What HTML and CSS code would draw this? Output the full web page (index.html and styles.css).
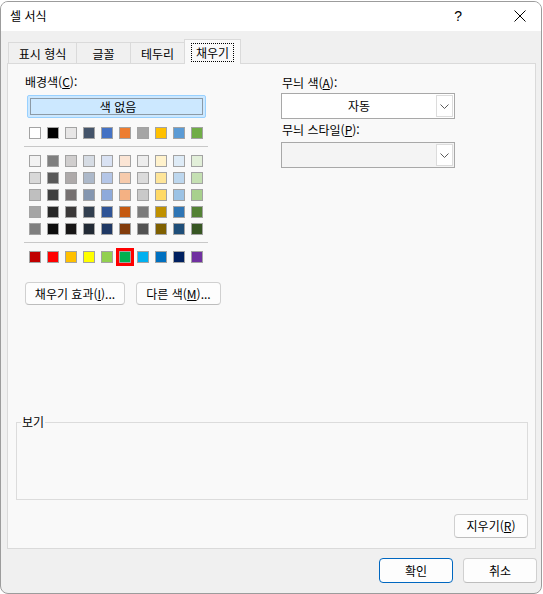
FILE: index.html
```html
<!DOCTYPE html>
<html lang="ko">
<head>
<meta charset="utf-8">
<title>셀 서식</title>
<link rel="stylesheet" href="styles.css">
</head>
<body>
<div class="window">
  <div class="titlebar">
    <span class="title">셀 서식</span>
    <span class="help">?</span>
    <svg class="close" width="12" height="12" viewBox="0 0 12 12"><path d="M0.5 0.5 L11.5 11.5 M11.5 0.5 L0.5 11.5" stroke="#000" stroke-width="1" fill="none"/></svg>
  </div>
  <div class="client">
    <div class="tabs">
      <div class="tab t1">표시 형식</div>
      <div class="tab t2">글꼴</div>
      <div class="tab t3">테두리</div>
      <div class="tab active"><span class="focus">채우기</span></div>
    </div>
    <div class="panel">
      <div class="cols">
        <div class="left">
          <div class="label">배경색(<u>C</u>):</div>
          <div class="nocolor"><span class="nocolor-in">색 없음</span></div>
          <div class="swrow first">
            <span class="sw" style="background:#FFFFFF"></span>
            <span class="sw" style="background:#000000"></span>
            <span class="sw" style="background:#E7E6E6"></span>
            <span class="sw" style="background:#44546A"></span>
            <span class="sw" style="background:#4472C4"></span>
            <span class="sw" style="background:#ED7D31"></span>
            <span class="sw" style="background:#A5A5A5"></span>
            <span class="sw" style="background:#FFC000"></span>
            <span class="sw" style="background:#5B9BD5"></span>
            <span class="sw" style="background:#70AD47"></span>
          </div>
          <div class="sep"></div>
          <div class="theme">
            <div class="swrow">
              <span class="sw" style="background:#F2F2F2"></span>
              <span class="sw" style="background:#7F7F7F"></span>
              <span class="sw" style="background:#D0CECE"></span>
              <span class="sw" style="background:#D6DCE4"></span>
              <span class="sw" style="background:#D9E2F3"></span>
              <span class="sw" style="background:#FBE5D5"></span>
              <span class="sw" style="background:#EDEDED"></span>
              <span class="sw" style="background:#FFF2CC"></span>
              <span class="sw" style="background:#DEEBF6"></span>
              <span class="sw" style="background:#E2EFD9"></span>
            </div>
            <div class="swrow">
              <span class="sw" style="background:#D8D8D8"></span>
              <span class="sw" style="background:#595959"></span>
              <span class="sw" style="background:#AEAAAA"></span>
              <span class="sw" style="background:#ADB9CA"></span>
              <span class="sw" style="background:#B4C6E7"></span>
              <span class="sw" style="background:#F7CBAC"></span>
              <span class="sw" style="background:#DBDBDB"></span>
              <span class="sw" style="background:#FEE599"></span>
              <span class="sw" style="background:#BDD7EE"></span>
              <span class="sw" style="background:#C5E0B3"></span>
            </div>
            <div class="swrow">
              <span class="sw" style="background:#BFBFBF"></span>
              <span class="sw" style="background:#3F3F3F"></span>
              <span class="sw" style="background:#757070"></span>
              <span class="sw" style="background:#8496B0"></span>
              <span class="sw" style="background:#8EAADB"></span>
              <span class="sw" style="background:#F4B183"></span>
              <span class="sw" style="background:#C9C9C9"></span>
              <span class="sw" style="background:#FFD965"></span>
              <span class="sw" style="background:#9CC3E5"></span>
              <span class="sw" style="background:#A8D08D"></span>
            </div>
            <div class="swrow">
              <span class="sw" style="background:#A5A5A5"></span>
              <span class="sw" style="background:#262626"></span>
              <span class="sw" style="background:#3A3838"></span>
              <span class="sw" style="background:#323F4F"></span>
              <span class="sw" style="background:#2F5496"></span>
              <span class="sw" style="background:#C55A11"></span>
              <span class="sw" style="background:#7B7B7B"></span>
              <span class="sw" style="background:#BF9000"></span>
              <span class="sw" style="background:#2E75B5"></span>
              <span class="sw" style="background:#538135"></span>
            </div>
            <div class="swrow">
              <span class="sw" style="background:#7F7F7F"></span>
              <span class="sw" style="background:#0C0C0C"></span>
              <span class="sw" style="background:#171616"></span>
              <span class="sw" style="background:#222A35"></span>
              <span class="sw" style="background:#1F3864"></span>
              <span class="sw" style="background:#833C0B"></span>
              <span class="sw" style="background:#525252"></span>
              <span class="sw" style="background:#7F6000"></span>
              <span class="sw" style="background:#1E4E79"></span>
              <span class="sw" style="background:#375623"></span>
            </div>
          </div>
          <div class="sep"></div>
          <div class="swrow std">
            <span class="sw" style="background:#C00000"></span>
            <span class="sw" style="background:#FF0000"></span>
            <span class="sw" style="background:#FFC000"></span>
            <span class="sw" style="background:#FFFF00"></span>
            <span class="sw" style="background:#92D050"></span>
            <span class="sw selected" style="background:#00B050"></span>
            <span class="sw" style="background:#00B0F0"></span>
            <span class="sw" style="background:#0070C0"></span>
            <span class="sw" style="background:#002060"></span>
            <span class="sw" style="background:#7030A0"></span>
          </div>
          <div class="btns">
            <div class="btn effect">채우기 효과(<u>I</u>)...</div>
            <div class="btn more">다른 색(<u>M</u>)...</div>
          </div>
        </div>
        <div class="right">
          <div class="label">무늬 색(<u>A</u>):</div>
          <div class="select">
            <span class="val">자동</span>
            <span class="arrow"><svg width="9" height="5" viewBox="0 0 9 5"><path d="M0.5 0.5 L4.5 4.5 L8.5 0.5" stroke="#5a5a5a" stroke-width="1" fill="none"/></svg></span>
          </div>
          <div class="label label2">무늬 스타일(<u>P</u>):</div>
          <div class="select disabled">
            <span class="val"></span>
            <span class="arrow"><svg width="9" height="5" viewBox="0 0 9 5"><path d="M0.5 0.5 L4.5 4.5 L8.5 0.5" stroke="#5a5a5a" stroke-width="1" fill="none"/></svg></span>
          </div>
        </div>
      </div>
      <fieldset class="preview"><legend>보기</legend></fieldset>
      <div class="clear-row"><div class="btn clear">지우기(<u>R</u>)</div></div>
    </div>
    <div class="footer">
      <div class="btn primary">확인</div>
      <div class="btn cancel">취소</div>
    </div>
  </div>
</div>
</body>
</html>
```
FILE: styles.css
```css
* { box-sizing: border-box; }
html, body { margin: 0; padding: 0; }
body {
  width: 543px;
  height: 594px;
  overflow: hidden;
  background: #ffffff;
  font-family: "Noto Sans CJK KR", "Noto Sans", sans-serif;
  font-size: 12px;
  color: #000;
}
u { text-decoration: underline; text-underline-offset: 1px; }

.window {
  margin-top: 1px;
  width: 542px;
  height: 593px;
  border: 1px solid #9c9c9c;
  border-radius: 8px;
  overflow: hidden;
  background: #f0f0f0;
  display: flex;
  flex-direction: column;
}

.titlebar {
  flex: none;
  height: 29px;
  background: #ffffff;
  display: flex;
  align-items: center;
}
.title { flex: 1; margin-left: 9px; line-height: 16px; margin-top: -2px; }
.help { font-family: "Liberation Sans", sans-serif; font-size: 14px; margin-right: 52px; margin-top: -2px; }
.close { margin-right: 15px; margin-top: -2px; }

.client {
  flex: 1;
  display: flex;
  flex-direction: column;
  padding: 8px 5px 0 6px;
}

.tabs {
  display: flex;
  align-items: flex-end;
  height: 25px;
  margin-bottom: -1px;
  padding-left: 1px;
}
.tab {
  height: 22px;
  border: 1px solid #dadada;
  border-bottom: none;
  background: #f0f0f0;
  display: flex;
  align-items: center;
  justify-content: center;
  margin-left: -1px;
  line-height: 16px;
}
.t1 { width: 69px; margin-left: 0; }
.t2 { width: 55px; }
.t3 { width: 55px; }
.tab.active {
  width: 57px;
  height: 25px;
  background: #f9f9f9;
  position: relative;
  z-index: 1;
  padding-top: 1px;
}
.focus {
  border: 1px dotted #000;
  height: 19px;
  padding: 0 4px;
  line-height: 17px;
}

.panel {
  height: 486px;
  border: 1px solid #dadada;
  background: #f9f9f9;
  display: flex;
  flex-direction: column;
}

.cols {
  display: grid;
  grid-template-columns: 257px 174px;
  padding: 10px 0 0 16px;
}

.label { line-height: 16px; height: 16px; padding-left: 1px; white-space: nowrap; }

.nocolor {
  margin: 5px 0 0 3px;
  width: 179px;
  height: 23px;
  background: #cce8ff;
  border: 1px solid #99d1ff;
  border-radius: 2px;
  padding: 2px;
}
.nocolor-in {
  display: flex;
  height: 100%;
  border: 1px solid #8c9aa6;
  align-items: center;
  justify-content: center;
  line-height: 15px;
  padding-left: 3px;
}

.swrow { display: flex; gap: 6px; margin-left: 5px; height: 12px; }
.sw { width: 12px; height: 12px; border: 1px solid #a3a3a3; flex: none; }
.swrow.first { margin-top: 9px; }
.sep { width: 184px; height: 1px; background: #c8c8c8; margin-top: 7px; }
.theme { display: flex; flex-direction: column; gap: 5px; margin-top: 8px; }
.swrow.std { margin-top: 8px; }
.sw.selected { outline: 3px solid #ff0000; }

.btns { display: flex; gap: 11px; margin: 19px 0 0 1px; }
.btn {
  height: 23px;
  background: #fdfdfd;
  border: 1px solid #d0d0d0;
  border-bottom-color: #bdbdbd;
  border-radius: 4px;
  display: flex;
  align-items: center;
  justify-content: center;
  line-height: 16px;
  white-space: nowrap;
}
.effect { width: 100px; }
.more { width: 85px; }

.right { padding-top: 1px; }
.select {
  margin-top: 2px;
  height: 26px;
  border: 1px solid #a8a8a8;
  background: #ffffff;
  display: flex;
}
.select .val { flex: 1; text-align: center; line-height: 24px; padding-left: 1px; }
.select .arrow {
  width: 17px;
  margin: 1px;
  border: 1px solid #dcdcdc;
  background: #fff;
  display: flex;
  align-items: center;
  justify-content: center;
}
.label2 { margin-top: 3px; }
.select.disabled { margin-top: 4px; background: #f4f4f4; }

.preview {
  margin: 110px 0 0 8px;
  padding: 0;
  width: 512px;
  height: 85px;
  border: 1px solid #dcdcdc;
  min-width: 0;
}
.preview legend {
  margin-left: 4px;
  padding: 0 1px;
  line-height: 14px;
  font-size: 12px;
}

.clear-row { display: flex; justify-content: flex-end; padding-right: 7px; margin-top: 14px; }
.clear { width: 74px; height: 24px; }

.footer {
  display: flex;
  justify-content: flex-end;
  gap: 10px;
  margin-top: 9px;
  margin-right: -1px;
}
.footer .btn { width: 74px; height: 25px; }
.primary { border: 1px solid #0067c0; }
```
